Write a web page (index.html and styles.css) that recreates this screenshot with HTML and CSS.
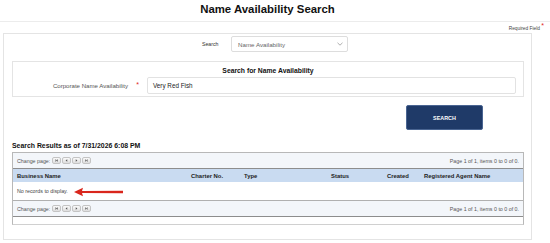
FILE: index.html
```html
<!DOCTYPE html>
<html lang="en">
<head>
  <meta charset="UTF-8">
  <title>Name Availability Search</title>
  <link rel="stylesheet" href="styles.css">
</head>
<body>

  <!-- ページタイトル -->
  <div class="page-header">
    <h1 class="page-title">Name Availability Search</h1>
  </div>

  <div class="required-note">Required Field <span class="req">*</span></div>

  <div class="outer-panel">

    <!-- 検索種別 -->
    <div class="search-type">
      <label class="search-type-label">Search</label>
      <div class="select-box">
        <span>Name Availability</span>
        <svg class="chevron" width="6" height="4" viewBox="0 0 6 4"><path d="M0.5 0.8 L3 3.2 L5.5 0.8" fill="none" stroke="#999" stroke-width="0.8"/></svg>
      </div>
    </div>

    <!-- 検索フォーム -->
    <div class="search-box">
      <div class="search-box-title">Search for Name Availability</div>
      <div class="field-row">
        <label class="field-label">Corporate Name Availability</label>
        <span class="req field-req">*</span>
        <div class="text-input">Very Red Fish</div>
      </div>
    </div>

    <div class="button-row">
      <button class="search-button">SEARCH</button>
    </div>

    <div class="results-title">Search Results as of 7/31/2026 6:08 PM</div>

    <!-- 結果グリッド -->
    <div class="grid">
      <div class="pager">
        <div class="pager-left">
          Change page:
          <span class="pg-btn"><svg width="5" height="4" viewBox="0 0 5 4"><rect x="0.5" y="0" width="0.8" height="4" fill="#555"/><path d="M4.5 0 L1.6 2 L4.5 4 Z" fill="#555"/></svg></span>
          <span class="pg-btn"><svg width="5" height="4" viewBox="0 0 5 4"><path d="M3.8 0 L1 2 L3.8 4 Z" fill="#555"/></svg></span>
          <span class="pg-btn"><svg width="5" height="4" viewBox="0 0 5 4"><path d="M1.2 0 L4 2 L1.2 4 Z" fill="#555"/></svg></span>
          <span class="pg-btn"><svg width="5" height="4" viewBox="0 0 5 4"><path d="M0.5 0 L3.4 2 L0.5 4 Z" fill="#555"/><rect x="3.7" y="0" width="0.8" height="4" fill="#555"/></svg></span>
        </div>
        <div class="pager-info">Page 1 of 1, items 0 to 0 of 0.</div>
      </div>

      <div class="grid-head">
        <div>Business Name</div>
        <div>Charter No.</div>
        <div>Type</div>
        <div>Status</div>
        <div>Created</div>
        <div>Registered Agent Name</div>
      </div>

      <div class="no-records">
        No records to display.
        <svg class="red-arrow" width="50" height="10" viewBox="0 0 50 10">
          <path d="M0 5 L9 0.8 L8 4 L49 3.8 L49 6.2 L8 6 L9 9.2 Z" fill="#d9261c"/>
        </svg>
      </div>

      <div class="pager pager-bottom">
        <div class="pager-left">
          Change page:
          <span class="pg-btn"><svg width="5" height="4" viewBox="0 0 5 4"><rect x="0.5" y="0" width="0.8" height="4" fill="#555"/><path d="M4.5 0 L1.6 2 L4.5 4 Z" fill="#555"/></svg></span>
          <span class="pg-btn"><svg width="5" height="4" viewBox="0 0 5 4"><path d="M3.8 0 L1 2 L3.8 4 Z" fill="#555"/></svg></span>
          <span class="pg-btn"><svg width="5" height="4" viewBox="0 0 5 4"><path d="M1.2 0 L4 2 L1.2 4 Z" fill="#555"/></svg></span>
          <span class="pg-btn"><svg width="5" height="4" viewBox="0 0 5 4"><path d="M0.5 0 L3.4 2 L0.5 4 Z" fill="#555"/><rect x="3.7" y="0" width="0.8" height="4" fill="#555"/></svg></span>
        </div>
        <div class="pager-info">Page 1 of 1, items 0 to 0 of 0.</div>
      </div>

      <div class="grid-foot"></div>
    </div>

  </div>

</body>
</html>
```

FILE: styles.css
```css
/* 全体 */
body {
  margin: 0;
  font-family: "Liberation Sans", Arial, sans-serif;
  color: #333333;
  background-color: #ffffff;
}

/* タイトル */
.page-header {
  border-bottom: 1px solid #ececec;
  height: 21px;
}

.page-title {
  width: 535px;
  margin: 0;
  padding-top: 3px;
  text-align: center;
  font-size: 11.4px;
  font-weight: bold;
  color: #111111;
  line-height: 12px;
}

.required-note {
  height: 11px;
  text-align: right;
  padding-right: 6px;
  font-size: 4.8px;
  line-height: 13px;
  color: #444444;
}

.req {
  color: #e0261c;
  font-size: 7px;
  vertical-align: top;
  line-height: 7px;
}

.outer-panel {
  margin-left: 3px;
  width: 512px;
  height: 203px;
  border: 1px solid #e4e4e4;
  padding: 2px 7px 0 8px;
}

/* 検索種別 */
.search-type {
  display: flex;
  align-items: center;
  margin-left: 190px;
  height: 16px;
}

.search-type-label {
  width: 29px;
  font-size: 5.2px;
  color: #333333;
}

.select-box {
  width: 105px;
  height: 14px;
  border: 1px solid #dddddd;
  border-radius: 2px;
  display: flex;
  align-items: center;
  justify-content: space-between;
  padding: 0 4px 0 6px;
  font-size: 6.2px;
  color: #666666;
}

.chevron {
  display: block;
}

/* 検索フォーム */
.search-box {
  margin-top: 9px;
  height: 34px;
  border: 1px solid #e4e4e4;
}

.search-box-title {
  text-align: center;
  font-size: 6.8px;
  font-weight: bold;
  color: #111111;
  margin-top: 5px;
  line-height: 8px;
}

.field-row {
  display: flex;
  align-items: center;
  margin-top: 2px;
}

.field-label {
  width: 115px;
  text-align: right;
  font-size: 6.1px;
  color: #555555;
}

.field-req {
  width: 19px;
  text-align: center;
  margin-top: -3px;
}

.text-input {
  width: 362px;
  height: 15px;
  border: 1px solid #e2e2e2;
  border-radius: 2px;
  padding-left: 5px;
  font-size: 6.3px;
  line-height: 15px;
  color: #222222;
}

/* ボタン */
.button-row {
  display: flex;
  justify-content: flex-end;
  padding-right: 41px;
  margin-top: 8px;
}

.search-button {
  width: 77px;
  height: 25px;
  background-color: #1f3a68;
  border: 1px solid #4a6592;
  border-radius: 2px;
  color: #ffffff;
  font-family: "Liberation Sans", Arial, sans-serif;
  font-size: 5.4px;
  font-weight: bold;
  padding: 0;
}

.results-title {
  margin-top: 12px;
  font-size: 6.9px;
  font-weight: bold;
  color: #111111;
  line-height: 8px;
}

/* 結果グリッド */
.grid {
  margin-top: 2px;
  width: 510px;
  border: 1px solid #b8b8b8;
  border-bottom: 1px solid #d0d0d0;
  font-size: 5.3px;
}

.pager {
  height: 15px;
  background-color: #f3f6fa;
  border-bottom: 1px solid #8d8d8d;
  display: flex;
  align-items: center;
  justify-content: space-between;
  padding: 0 4px 0 4px;
  color: #555555;
}

.pager-left {
  display: flex;
  align-items: center;
  gap: 1px;
}

.pg-btn:first-of-type {
  margin-left: 1px;
}

.pg-btn {
  width: 9px;
  height: 7px;
  border: 1px solid #c4c4c4;
  border-radius: 2px;
  background: linear-gradient(#fafafa, #dedede);
  display: flex;
  align-items: center;
  justify-content: center;
  box-sizing: border-box;
}

.pg-btn svg {
  display: block;
  width: 3px;
  height: 3px;
}

.pager-info {
  color: #555555;
}

.grid-head {
  height: 13px;
  background-color: #c9dbf1;
  display: grid;
  grid-template-columns: 174px 53px 87px 56px 37px 1fr;
  align-items: center;
  padding-left: 4px;
  font-size: 5.9px;
  font-weight: bold;
  color: #222222;
}

.no-records {
  position: relative;
  height: 18px;
  line-height: 19px;
  padding-left: 4px;
  border-bottom: 1px solid #b0b0b0;
  color: #444444;
}

/* 注釈の赤い矢印 */
.red-arrow {
  position: absolute;
  left: 61px;
  top: 5px;
}

.grid-foot {
  height: 7px;
}
```
